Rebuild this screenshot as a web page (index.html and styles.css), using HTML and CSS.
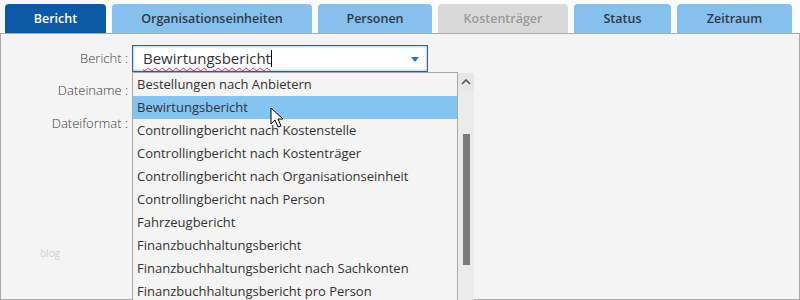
FILE: index.html
```html
<!DOCTYPE html>
<html lang="de">
<head>
  <meta charset="UTF-8">
  <title>Bericht</title>
  <link rel="stylesheet" href="styles.css">
</head>
<body>

<div class="tabs">
  <div class="tab tab-active w-bericht">Bericht</div>
  <div class="tab w-org">Organisationseinheiten</div>
  <div class="tab w-pers">Personen</div>
  <div class="tab tab-disabled w-kost">Kostenträger</div>
  <div class="tab w-status">Status</div>
  <div class="tab w-zeit">Zeitraum</div>
</div>

<div class="panel">
  <div class="form">
    <label class="label">Bericht :</label>
    <div class="combo">
      <div class="combo-box">
        <span class="combo-text">Bewirtungsbericht</span><span class="caret"></span>
        <span class="arrow"></span>
      </div>
      <!-- aufgeklappte Liste -->
      <div class="dropdown">
        <ul class="options">
          <li>Bestellungen nach Anbietern</li>
          <li class="selected">Bewirtungsbericht</li>
          <li>Controllingbericht nach Kostenstelle</li>
          <li>Controllingbericht nach Kostenträger</li>
          <li>Controllingbericht nach Organisationseinheit</li>
          <li>Controllingbericht nach Person</li>
          <li>Fahrzeugbericht</li>
          <li>Finanzbuchhaltungsbericht</li>
          <li>Finanzbuchhaltungsbericht nach Sachkonten</li>
          <li>Finanzbuchhaltungsbericht pro Person</li>
        </ul>
        <div class="scrollbar">
          <div class="scroll-up">
            <svg width="10" height="6" viewBox="0 0 10 6"><path d="M1 5 L5 1 L9 5" fill="none" stroke="#555" stroke-width="1.6"/></svg>
          </div>
          <div class="scroll-thumb"></div>
        </div>
        <svg class="pointer" width="16" height="22" viewBox="0 0 16 22">
          <path d="M1 1 L1 17 L5 13 L8 20 L11 19 L8 12 L13 12 Z" fill="#fff" stroke="#000" stroke-width="1"/>
        </svg>
      </div>
    </div>
    <label class="label row2">Dateiname :</label>
    <div></div>
    <label class="label row3">Dateiformat :</label>
    <div></div>
  </div>
  <div class="watermark">blog</div>
</div>

</body>
</html>
```

FILE: styles.css
```css
body {
  margin: 0;
  background: #fbfbfb;
  font-family: "Open Sans", Arial, sans-serif;
  color: #333;
  width: 800px;
  height: 300px;
  overflow: hidden;
}
.tabs {
  display: flex;
  gap: 6px;
  padding: 4px 0 0 5px;
  height: 29px;
}
.tab {
  height: 29px;
  line-height: 29px;
  text-align: center;
  font-size: 12.5px;
  font-weight: 600;
  color: #2e3a46;
  background: #86c0ec;
  border-radius: 4px 4px 0 0;
}
.tab-active {
  background: #0b5aa6;
  color: #fff;
}
.tab-disabled {
  background: #d9d9d9;
  color: #9a9a9a;
}
.w-bericht { width: 101px; }
.w-org { width: 200px; }
.w-pers { width: 114px; }
.w-kost { width: 130px; }
.w-status { width: 97px; }
.w-zeit { width: 115px; }

.panel {
  position: relative;
  box-sizing: border-box;
  height: 267px;
  border: 1px solid #ababab;
  background: #f4f4f4;
  padding-top: 11px;
}
.form {
  display: grid;
  grid-template-columns: 127px 296px;
  grid-template-rows: 27px 36px 30px;
  column-gap: 4px;
}
.label {
  text-align: right;
  font-size: 13px;
  font-weight: 300;
  color: #3c3c3c;
  line-height: 27px;
  padding-top: 0;
}
.row2, .row3 {
  line-height: 36px;
}
.row3 {
  line-height: 30px;
}
.combo {
  position: relative;
}
.combo-box {
  position: relative;
  box-sizing: border-box;
  height: 27px;
  border: 1px solid #2b5f96;
  background: #fff;
  box-shadow: inset 0 0 2px 1px #b9d6f2;
  padding-left: 10px;
  font-size: 15px;
  line-height: 25px;
  color: #333;
}
.combo-text {
  text-decoration: underline wavy #e03030;
  text-decoration-thickness: 1px;
  text-underline-offset: 3px;
}
.caret {
  display: inline-block;
  width: 1px;
  height: 17px;
  background: #000;
  vertical-align: -3px;
}
.arrow {
  position: absolute;
  right: 8px;
  top: 11px;
  border-left: 4px solid transparent;
  border-right: 4px solid transparent;
  border-top: 5px solid #2f72b4;
}
.dropdown {
  position: absolute;
  top: 27px;
  left: 0;
  display: flex;
}
.options {
  list-style: none;
  margin: 0;
  padding: 0;
  width: 324px;
  height: 240px;
  overflow: hidden;
  border: 1px solid #a9a9a9;
  border-bottom: none;
  background: #f4f4f4;
}
.options li {
  height: 23px;
  line-height: 23px;
  padding-left: 4px;
  font-size: 13px;
  color: #333;
  white-space: nowrap;
}
.options li.selected {
  background: #84c4f0;
}
.scrollbar {
  width: 16px;
  height: 240px;
  background: #ebebeb;
  margin-top: 1px;
}
.scroll-up {
  height: 18px;
  display: flex;
  justify-content: center;
  align-items: center;
  background: #e6e6e6;
}
.scroll-thumb {
  width: 7px;
  height: 131px;
  margin: 43px 0 0 5px;
  background: #7b7b7b;
}
.pointer {
  position: absolute;
  left: 138px;
  top: 35px;
}
.watermark {
  position: absolute;
  left: 39px;
  top: 212px;
  font-size: 10px;
  color: #d2d2d2;
}
```
